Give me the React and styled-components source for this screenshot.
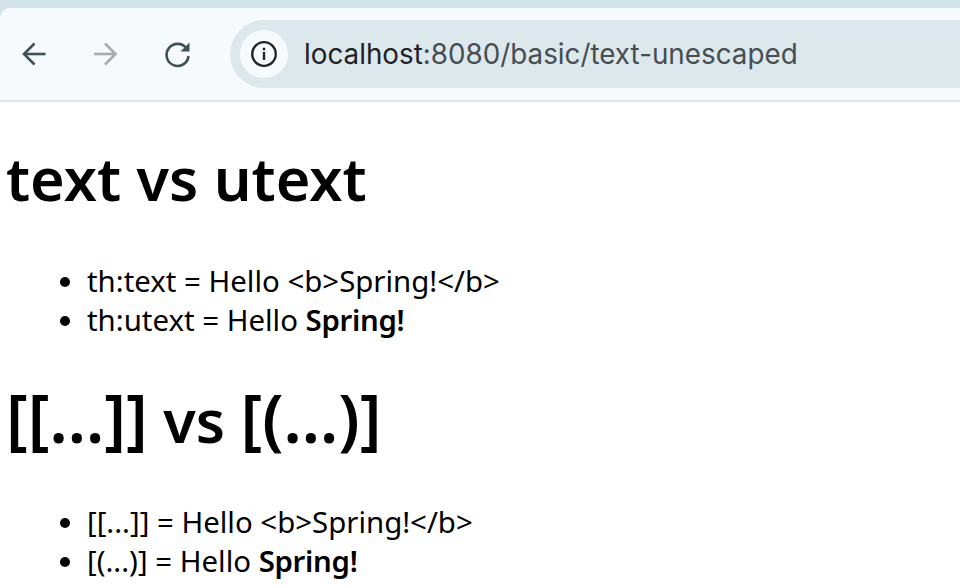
import React from 'react';
import styled, { createGlobalStyle } from 'styled-components';

const GlobalStyle = createGlobalStyle`
    html, body {
        margin: 0;
        padding: 0;
        background: #FFFFFF;
        overflow: hidden;
    }
`

export default function App(){
    return (
    <>
        <GlobalStyle />
        <Frame>
            <Toolbar>
                <NavButton $gap={41}>
                    <svg width="30" height="30" viewBox="0 0 30 30" fill="none" stroke="#3F5056" strokeWidth="2.6">
                        <path d="M26.500 15H6" />
                        <path d="M15.500 4.500 5 15 15.500 25.500" />
                    </svg>
                </NavButton>
                <NavButton $gap={43}>
                    <svg width="30" height="30" viewBox="0 0 30 30" fill="none" stroke="#A6ABAD" strokeWidth="2.6">
                        <path d="M4 15h21" />
                        <path d="M15 4.500 25.500 15 15 25.500" />
                    </svg>
                </NavButton>
                <NavButton $gap={37}>
                    <svg width="30" height="30" viewBox="0 0 30 30" fill="none">
                        <path d="M23.500 9.500A11 11 0 1 0 25.500 17" stroke="#3F5056" strokeWidth="2.6" />
                        <path d="M26.500 3.500V12.500H17.500Z" fill="#3F5056" />
                    </svg>
                </NavButton>
                <Omnibox>
                    <InfoChip>
                        <svg width="28" height="28" viewBox="0 0 28 28" fill="none">
                            <circle cx="14" cy="14" r="11.800" stroke="#1F2325" strokeWidth="2.300" />
                            <rect x="12.800" y="12" width="2.400" height="8" fill="#1F2325" />
                            <rect x="12.800" y="7.800" width="2.400" height="2.500" fill="#1F2325" />
                        </svg>
                    </InfoChip>
                    <Url>localhost<span>:8080/basic/text-unescaped</span></Url>
                </Omnibox>
            </Toolbar>
            <Page>
                <Heading>text vs utext</Heading>
                <List $top={46} $bottom={42}>
                    <li>th:text = Hello &lt;b&gt;Spring!&lt;/b&gt;</li>
                    <li>th:utext = Hello <b>Spring!</b></li>
                </List>
                <Heading><Brackets>[[...]]</Brackets> vs <Brackets>[(...)]</Brackets></Heading>
                <List $top={45} $bottom={0}>
                    <li>[[...]] = Hello &lt;b&gt;Spring!&lt;/b&gt;</li>
                    <li>[(...)] = Hello <b>Spring!</b></li>
                </List>
            </Page>
        </Frame>
    </>
    )
}

const Frame = styled.div`
    width: 960px;
    height: 586px;
    overflow: hidden;
    background-color: #D3E3EA;
    padding-top: 8px;
    box-sizing: border-box;
`

const Toolbar = styled.div`
    height: 92px;
    background-color: #F6FAFD;
    border-top-left-radius: 10px;
    border-bottom: 2px solid #DDE5E8;
    display: flex;
    align-items: center;
    padding-left: 19px;
`

const NavButton = styled.div`
    width: 30px;
    height: 30px;
    margin-right: ${props => props.$gap}px;
    display: flex;
    align-items: center;
    justify-content: center;
`

const Omnibox = styled.div`
    flex: 1;
    height: 68px;
    margin-top: -1px;
    background-color: #DDE8ED;
    border-radius: 34px 0 0 34px;
    display: flex;
    align-items: center;
    padding-left: 10px;
`

const InfoChip = styled.div`
    width: 48px;
    height: 48px;
    border-radius: 50%;
    background-color: #F6FAFD;
    display: flex;
    align-items: center;
    justify-content: center;
    margin-right: 16px;
`

const Url = styled.div`
    font-family: 'Inter', sans-serif;
    font-size: 27.800px;
    color: #1F2325;
    white-space: nowrap;

    span {
        color: #474E52;
    }
`

const Page = styled.div`
    background-color: #FFFFFF;
    height: 486px;
    padding: 38px 0 0 6px;
    color: #000000;
    font-family: 'Noto Sans', sans-serif;
`

const Heading = styled.h1`
    font-size: 59.400px;
    line-height: 76px;
    font-weight: 600;
    margin: 0;
`

const Brackets = styled.span`
    font-size: 66px;
    line-height: 0;
`

const List = styled.ul`
    margin: ${props => props.$top}px 0 ${props => props.$bottom}px 0;
    padding: 0 0 0 81px;
    font-size: 29.400px;
    line-height: 39px;

    b {
        font-weight: 600;
        letter-spacing: -0.3px;
    }
`
